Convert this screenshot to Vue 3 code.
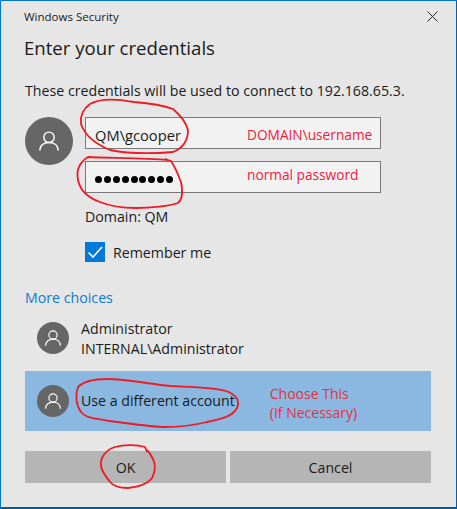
<template>
  <div class="dialog">
    <div class="titlebar">
      <span>Windows Security</span>
      <svg class="close" width="11" height="11" viewBox="0 0 11 11"><path d="M0.5 0.5 L10.5 10.5 M10.5 0.5 L0.5 10.5" stroke="#222" stroke-width="1" fill="none" /></svg>
    </div>
    <h1 class="heading">Enter your credentials</h1>
    <p class="message">These credentials will be used to connect to 192.168.65.3.</p>

    <div class="login">
      <div class="avatar big">
        <svg width="20" height="20" viewBox="0 0 24 24"><use href="#person" /></svg>
      </div>
      <div class="fields">
        <div class="field user">
          <span class="value">QM\gcooper</span>
          <span class="note note-user">DOMAIN\username</span>
        </div>
        <div class="field pass">
          <span class="dots">
            <i v-for="n in 9" :key="n"></i>
          </span>
          <span class="note note-pass">normal password</span>
        </div>
        <div class="domain">Domain: QM</div>
        <label class="remember">
          <span class="check">
            <svg width="20" height="20" viewBox="0 0 20 20"><path d="M3.5 10.5 L8 15 L17 5" stroke="#fff" stroke-width="1.6" fill="none" /></svg>
          </span>
          Remember me
        </label>
      </div>
    </div>

    <a class="more">More choices</a>

    <div class="account">
      <div class="avatar small">
        <svg width="16" height="16" viewBox="0 0 24 24"><use href="#person" /></svg>
      </div>
      <div class="account-text stacked">
        <div>Administrator</div>
        <div>INTERNAL\Administrator</div>
      </div>
    </div>

    <div class="account selected">
      <div class="avatar small">
        <svg width="16" height="16" viewBox="0 0 24 24"><use href="#person" /></svg>
      </div>
      <div class="account-text">Use a different account</div>
      <div class="note note-choose">Choose This<br />(If Necessary)</div>
    </div>

    <div class="buttons">
      <button class="btn">OK</button>
      <button class="btn">Cancel</button>
    </div>

    <!-- person glyph shared by the avatars -->
    <svg width="0" height="0" class="defs">
      <defs>
        <g id="person" fill="none" stroke="#fff" stroke-width="1.7">
          <circle cx="12" cy="7.5" r="6.2" />
          <path d="M1 23.5 C1 17 6 13.7 12 13.7 C18 13.7 23 17 23 23.5" />
        </g>
      </defs>
    </svg>

    <!-- hand drawn red circles on top of the dialog -->
    <svg class="scribbles" width="457" height="509" viewBox="0 0 457 509">
      <path v-for="(d, i) in scribbles" :key="i" :d="d" fill="none" stroke="#ed1c24" stroke-width="1.8" stroke-linejoin="round" />
    </svg>
  </div>
</template>

<script setup>
const scribbles = [
  'M134 102 C118 99 100 98 90 104 C83 109 80 116 81 124 C84 133 93 143 110 150 C125 153 150 154 173 152 C183 148 188 140 188 130 C186 122 180 115 173 109 C160 104 147 103 134 102',
  'M168 160 C145 158 110 158 88 157 C80 162 76 170 78 180 C80 190 86 197 100 202 C112 207 125 208 136 208 C150 208 170 206 178 203 C183 199 183 192 181 182 C178 174 175 167 171 161 L165 159',
  'M78 387 C84 381 95 379 107 379 C125 379 150 384 170 386 C190 387 213 387 226 391 C237 395 240 401 237 408 C233 416 222 419 207 422 C192 426 175 427 163 427 C145 426 125 423 110 421 C96 419 86 418 81 412 C76 405 75 395 78 387',
  'M147 452 L145 447 C138 445 125 444 115 447 C106 450 100 457 101 466 C102 473 107 477 110 482 C114 487 120 488 128 488 C137 487 147 485 152 478 C155 472 156 465 153 459 C151 455 149 452 147 450'
]
</script>

<style>
html, body { margin: 0; background: #e6e6e6; }
</style>

<style scoped>
.dialog {
  position: relative;
  width: 457px;
  height: 509px;
  box-sizing: border-box;
  overflow: hidden;
  background: #e6e6e6;
  border: 1px solid #0078d7;
  border-right-color: #0a5ca8;
  border-bottom: 2px solid #005a9e;
  padding: 0 25px 0 24px;
  font-family: "Open Sans", "Noto Sans", sans-serif;
  font-size: 14.2px;
  color: #1a1a1a;
}
.titlebar {
  display: flex;
  justify-content: space-between;
  align-items: center;
  height: 31px;
  margin-left: -1px;
  font-size: 11.5px;
}
.close { margin-right: -7px; }
.heading {
  margin: 2px 0 0 -1px;
  font-size: 18.6px;
  font-weight: 400;
  line-height: 28px;
}
.message {
  margin: 19px 0 0;
  line-height: 20px;
}
.login {
  display: flex;
  margin-top: 16px;
}
.avatar {
  display: flex;
  align-items: center;
  justify-content: center;
  flex: none;
  border-radius: 50%;
  background: #666;
}
.avatar.big { width: 48px; height: 48px; }
.avatar.small { width: 32px; height: 32px; }
.fields {
  margin-left: 12px;
  width: 296px;
}
.field {
  display: flex;
  align-items: center;
  box-sizing: border-box;
  height: 32px;
  background: #f2f2f2;
  border: 1px solid #7a7a7a;
  padding-left: 9px;
  font-size: 14.7px;
}
.pass { margin-top: 12px; }
.value { width: 152px; flex: none; margin-top: 4px; }
.note { color: #f0203c; font-size: 13.7px; }
.note-user { margin-top: 3px; }
.note-pass { margin-top: -6px; }
.dots {
  display: flex;
  gap: 1.9px;
  width: 152px;
  flex: none;
  margin-top: 4px;
}
.dots i {
  display: block;
  width: 7px;
  height: 7px;
  border-radius: 50%;
  background: #000;
}
.domain {
  margin-top: 14px;
  line-height: 20px;
}
.remember {
  display: flex;
  align-items: center;
  gap: 8px;
  margin-top: 15px;
  height: 20px;
}
.check {
  display: block;
  width: 20px;
  height: 20px;
  background: #0078d7;
}
.check svg { display: block; }
.more {
  display: block;
  margin-top: 26px;
  line-height: 20px;
  color: #0c7cd5;
}
.account {
  display: flex;
  align-items: center;
  height: 60px;
  padding-left: 12px;
  width: 406px;
  box-sizing: border-box;
}
.account-text {
  margin-left: 12px;
  line-height: 20px;
}
.stacked { margin-top: 2px; }
.selected {
  margin-top: 3px;
  background: #8ab8e0;
}
.note-choose {
  margin-left: 35px;
  margin-top: 4px;
  font-size: 14px;
  line-height: 19px;
  color: #e5303f;
}
.buttons {
  display: flex;
  gap: 4px;
  width: 406px;
  margin-top: 20px;
}
.btn {
  flex: 1;
  height: 32px;
  border: 0;
  padding: 0;
  background: #b5b5b5;
  font: inherit;
  color: #1a1a1a;
}
.defs { position: absolute; }
.scribbles {
  position: absolute;
  left: -1px;
  top: -1px;
  pointer-events: none;
}
</style>
